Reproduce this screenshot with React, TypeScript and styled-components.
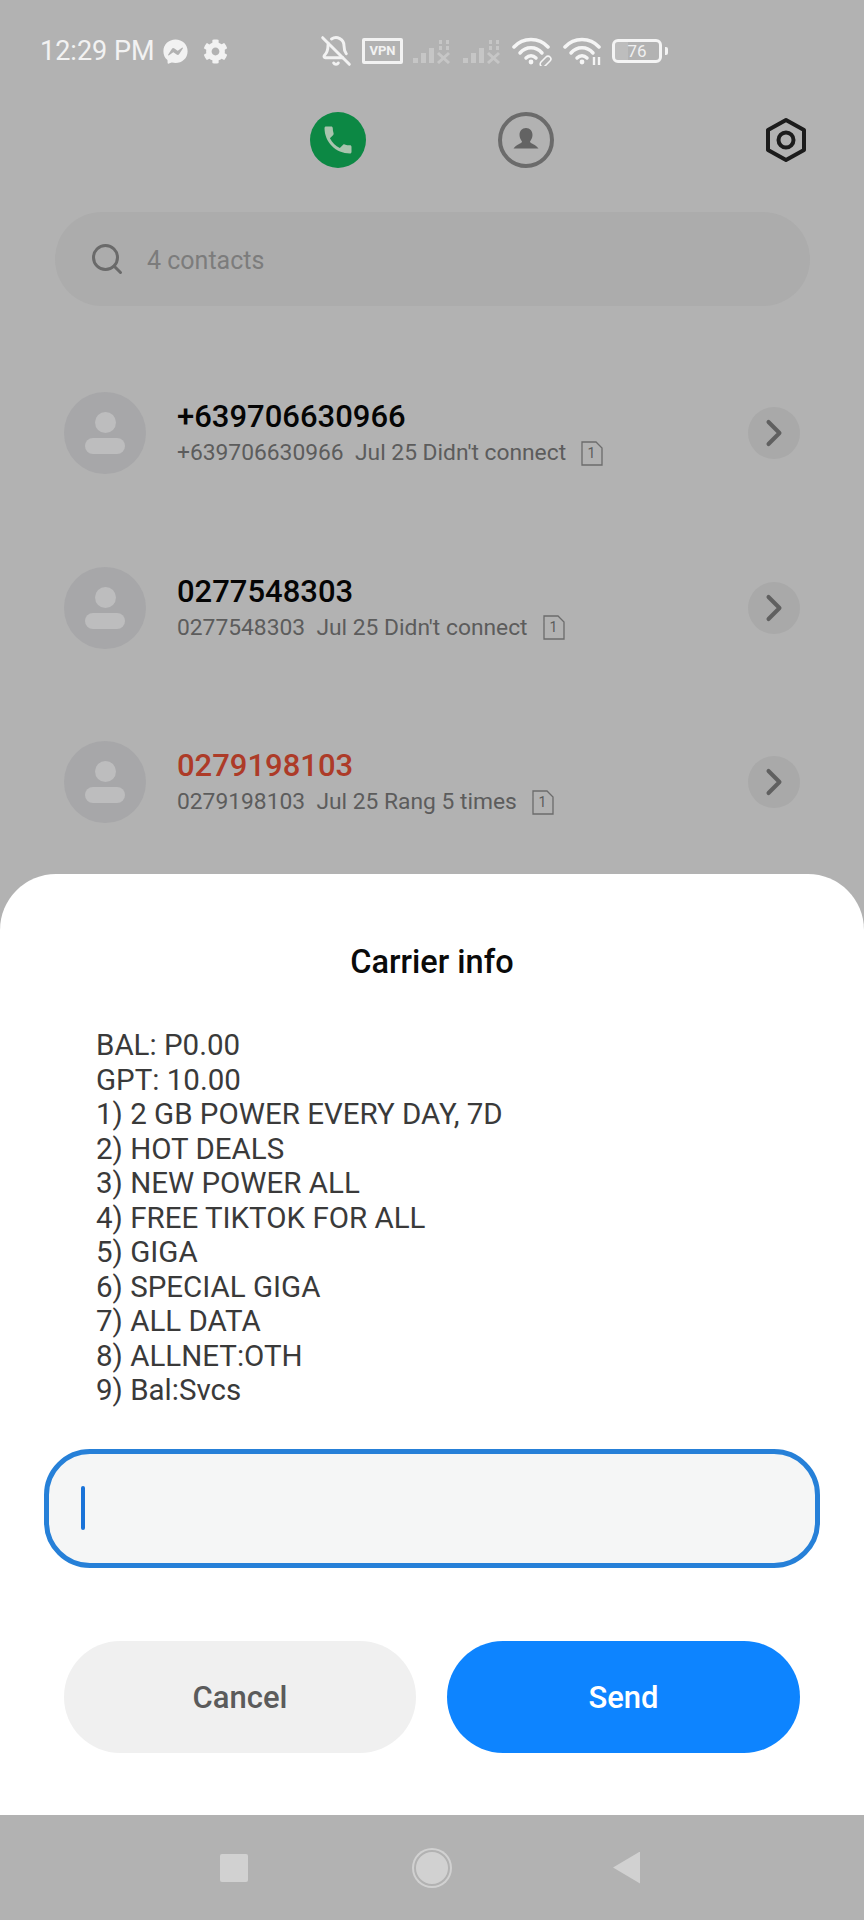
import React from 'react';
import styled, { createGlobalStyle } from 'styled-components';
import { FaCog, FaFacebookMessenger } from 'react-icons/fa';
import { MdPhone } from 'react-icons/md';
import { BellOff, ChevronRight, Search } from 'lucide-react';

const GlobalStyle = createGlobalStyle`
  html, body {
    margin: 0;
    padding: 0;
    background: #b2b2b2;
  }
  * {
    box-sizing: border-box;
  }
`;

const Screen = styled.div`
  width: 864px;
  height: 1920px;
  display: flex;
  flex-direction: column;
  overflow: hidden;
  font-family: Roboto, "Liberation Sans", sans-serif;
  background: #b2b2b2;
`;

const Dimmed = styled.div`
  height: 874px;
  flex: none;
  display: flex;
  flex-direction: column;
  overflow: hidden;
`;

const StatusBar = styled.div`
  height: 102px;
  flex: none;
  display: flex;
  align-items: center;
  padding-left: 40px;
  color: #f2f2f2;
`;

const Clock = styled.span`
  font-size: 27px;
  line-height: 30px;
  width: 122px;
  white-space: nowrap;
`;

const StatusSlot = styled.span<{ $w: number; $gap?: number }>`
  display: flex;
  align-items: center;
  justify-content: center;
  flex: none;
  width: ${p => p.$w}px;
  margin-left: ${p => p.$gap ?? 0}px;
`;

const VpnBox = styled.span`
  width: 41px;
  height: 26px;
  border: 3px solid #f2f2f2;
  border-radius: 2px;
  font-size: 13px;
  font-weight: 700;
  line-height: 20px;
  text-align: center;
`;

const Battery = styled.span`
  position: relative;
  width: 50px;
  height: 24px;
  border: 3px solid #f4f4f4;
  border-radius: 6px;
  font-size: 17px;
  line-height: 18px;
  text-align: center;
  color: #f0f0f0;
  background: linear-gradient(to right, #bdbdbd 0 13px, transparent 13px);
  background-clip: padding-box;

  &::after {
    content: '';
    position: absolute;
    right: -9px;
    top: 5px;
    width: 3px;
    height: 8px;
    border-radius: 0 2px 2px 0;
    background: #f4f4f4;
  }
`;

const TabBar = styled.div`
  height: 76px;
  flex: none;
  display: flex;
  align-items: center;
  padding: 0 57px 0 310px;
`;

const CallTab = styled.div`
  width: 56px;
  height: 56px;
  border-radius: 50%;
  background: #0c8844;
  color: #a9c4ae;
  display: flex;
  align-items: center;
  justify-content: center;
`;

const ContactTab = styled.div`
  width: 56px;
  height: 56px;
  margin-left: 132px;
`;

const SettingsTab = styled.div`
  width: 42px;
  height: 46px;
  margin-left: auto;
`;

const SearchBar = styled.div`
  height: 94px;
  flex: none;
  margin: 34px 54px 0 55px;
  border-radius: 47px;
  background: #acacac;
  display: flex;
  align-items: center;
  padding-left: 34px;
  color: #6a6a6a;
`;

const SearchHint = styled.span`
  margin: 2px 0 0 22px;
  font-size: 25px;
  color: #7c7c7c;
`;

const List = styled.div`
  margin-top: 40px;
  display: flex;
  flex-direction: column;
`;

const Row = styled.div`
  height: 174.5px;
  flex: none;
  display: flex;
  align-items: center;
  padding: 0 64px;
`;

const AvatarCircle = styled.div`
  width: 82px;
  height: 82px;
  flex: none;
  border-radius: 50%;
  background: #a7a7a9;
  display: flex;
  flex-direction: column;
  align-items: center;
`;

const AvatarHead = styled.span`
  width: 21px;
  height: 21px;
  margin-top: 20px;
  border-radius: 50%;
  background: #bdbdbe;
`;

const AvatarBody = styled.span`
  width: 40px;
  height: 16px;
  margin-top: 5px;
  border-radius: 8px;
  background: #bdbdbe;
`;

const RowText = styled.div`
  flex: 1;
  margin: 2px 0 0 31px;
  display: flex;
  flex-direction: column;
`;

const Name = styled.div<{ $missed?: boolean }>`
  font-size: 31px;
  font-weight: 500;
  line-height: 36px;
  color: ${p => (p.$missed ? '#ad3b28' : '#050505')};
`;

const Detail = styled.div`
  margin-top: 2px;
  display: flex;
  align-items: center;
  font-size: 22.800px;
  line-height: 32px;
  color: #5c5c5c;
  white-space: pre;
`;

const SimBadge = styled.svg`
  margin-left: 15px;
  flex: none;
`;

const RowArrow = styled.div`
  width: 52px;
  height: 52px;
  flex: none;
  border-radius: 50%;
  background: #a9a9a9;
  color: #606060;
  display: flex;
  align-items: center;
  justify-content: center;
`;

const Sheet = styled.div`
  height: 941px;
  flex: none;
  border-radius: 56px 56px 0 0;
  background: #fff;
  display: flex;
  flex-direction: column;
`;

const SheetTitle = styled.div`
  margin-top: 70px;
  font-size: 32.500px;
  font-weight: 500;
  line-height: 36px;
  text-align: center;
  color: #0a0a0a;
`;

const Message = styled.div`
  margin: 48px 0 0 96px;
  font-size: 29.500px;
  line-height: 34.500px;
  color: #3a3a3a;
`;

const InputField = styled.div`
  height: 119px;
  flex: none;
  margin: 41px 44px 0 44px;
  border: 5px solid #2680d8;
  border-radius: 46px;
  background: #f5f6f6;
  display: flex;
  align-items: center;
  padding-left: 32px;
`;

const Caret = styled.span`
  width: 4px;
  height: 44px;
  border-radius: 2px;
  background: #1a73d8;
`;

const Actions = styled.div`
  margin: 73px 64px 0 64px;
  display: grid;
  grid-template-columns: 352px 353px;
  column-gap: 31px;
`;

const ActionButton = styled.button<{ $primary?: boolean }>`
  height: 112px;
  border: 0;
  border-radius: 56px;
  padding: 2px 0 0;
  font-family: inherit;
  font-size: 31px;
  font-weight: 500;
  background: ${p => (p.$primary ? '#0d84ff' : '#f0f0f0')};
  color: ${p => (p.$primary ? '#fff' : '#5b5b5b')};
`;

const NavBar = styled.div`
  flex: 1;
  display: flex;
  align-items: center;
  padding-left: 220px;
  background: #b2b2b2;
`;

const NavSquare = styled.span`
  width: 28px;
  height: 28px;
  border-radius: 2px;
  background: #d1d1d1;
`;

const NavCircle = styled.span`
  width: 36px;
  height: 36px;
  margin-left: 166px;
  border-radius: 50%;
  background: #d1d1d1;
  border: 2px solid #b2b2b2;
  box-shadow: 0 0 0 2px #d1d1d1;
`;

const NavBack = styled.span`
  width: 27px;
  height: 32px;
  margin-left: 163px;
  background: #d1d1d1;
  clip-path: polygon(100% 0, 100% 100%, 0 50%);
`;

const SignalIcon = () => (
  <svg width="40" height="26" viewBox="0 0 40 26" fill="#c6c6c6">
    <rect x="0" y="20" width="5" height="5" />
    <rect x="8" y="15" width="5" height="10" />
    <rect x="16" y="10" width="5" height="15" />
    <rect x="26" y="2" width="3" height="4" />
    <rect x="33" y="2" width="3" height="4" />
    <rect x="26" y="8" width="3" height="4" />
    <rect x="33" y="8" width="3" height="4" />
    <path d="M25 15l11 10M36 15L25 25" stroke="#c6c6c6" strokeWidth="3" fill="none" />
  </svg>
);

const WifiIcon = ({ linked }: { linked?: boolean }) => (
  <svg width="42" height="30" viewBox="0 0 42 30" fill="none" stroke="#f5f5f5" strokeWidth="3.500" strokeLinecap="round">
    <path d="M2 11C11 1 27 1 36 11" />
    <path d="M8 17C14 10 24 10 30 17" />
    <path d="M14 22C17 19 21 19 24 22" />
    <circle cx="19" cy="26" r="2.400" fill="#f5f5f5" stroke="none" />
    {linked ? (
      <path d="M29 26l5-5a2.600 2.600 0 0 1 4 4l-5 5a2.600 2.600 0 0 1-4-4z" strokeWidth="1.600" />
    ) : (
      <path d="M31 21v8M36 21v8" strokeWidth="2.400" strokeLinecap="butt" />
    )}
  </svg>
);

const ContactIcon = () => (
  <svg width="56" height="56" viewBox="0 0 56 56">
    <circle cx="28" cy="28" r="26" fill="none" stroke="#6b6b6b" strokeWidth="4" />
    <path
      d="M28 16c4 0 6.500 3 6.500 7 0 3-1.500 5-2.500 6.500 0 2 6 3 8.500 7H15.500c2.500-4 8.500-5 8.500-7-1-1.500-2.500-3.500-2.500-6.500 0-4 2.500-7 6.500-7z"
      fill="#636363"
    />
  </svg>
);

const SettingsIcon = () => (
  <svg width="42" height="46" viewBox="0 0 42 46" fill="none" stroke="#1c1c1c" strokeWidth="4">
    <path d="M21 3l18 10v20L21 43 3 33V13z" strokeLinejoin="round" />
    <circle cx="21" cy="23" r="7.500" />
  </svg>
);

const SimIcon = () => (
  <SimBadge width="22" height="25" viewBox="0 0 22 25">
    <path d="M1 1h14l6 6v17H1z" fill="none" stroke="#6c6c6c" strokeWidth="1.300" />
    <text x="10.500" y="17" fontSize="14" textAnchor="middle" fill="#5c5c5c" fontFamily="Roboto, sans-serif">
      1
    </text>
  </SimBadge>
);

const calls = [
  { name: '+639706630966', detail: '+639706630966  Jul 25 Didn\'t connect' },
  { name: '0277548303', detail: '0277548303  Jul 25 Didn\'t connect' },
  { name: '0279198103', detail: '0279198103  Jul 25 Rang 5 times', missed: true },
];

const menu = [
  'BAL: P0.00',
  'GPT: 10.00',
  '1) 2 GB POWER EVERY DAY, 7D',
  '2) HOT DEALS',
  '3) NEW POWER ALL',
  '4) FREE TIKTOK FOR ALL',
  '5) GIGA',
  '6) SPECIAL GIGA',
  '7) ALL DATA',
  '8) ALLNET:OTH',
  '9) Bal:Svcs',
];

const App = () => {
  return (
    <Screen>
      <GlobalStyle />
      <Dimmed>
        <StatusBar>
          <Clock>12:29 PM</Clock>
          <StatusSlot $w={26}>
            <FaFacebookMessenger size={25} />
          </StatusSlot>
          <StatusSlot $w={26} $gap={14}>
            <FaCog size={25} />
          </StatusSlot>
          <StatusSlot $w={32} $gap={92}>
            <BellOff size={32} strokeWidth={2.200} />
          </StatusSlot>
          <StatusSlot $w={41} $gap={10}>
            <VpnBox>VPN</VpnBox>
          </StatusSlot>
          <StatusSlot $w={40} $gap={10}>
            <SignalIcon />
          </StatusSlot>
          <StatusSlot $w={40} $gap={10}>
            <SignalIcon />
          </StatusSlot>
          <StatusSlot $w={42} $gap={9}>
            <WifiIcon linked />
          </StatusSlot>
          <StatusSlot $w={42} $gap={9}>
            <WifiIcon />
          </StatusSlot>
          <StatusSlot $w={50} $gap={7}>
            <Battery>76</Battery>
          </StatusSlot>
        </StatusBar>
        <TabBar>
          <CallTab>
            <MdPhone size={36} />
          </CallTab>
          <ContactTab>
            <ContactIcon />
          </ContactTab>
          <SettingsTab>
            <SettingsIcon />
          </SettingsTab>
        </TabBar>
        <SearchBar>
          <Search size={36} strokeWidth={2} />
          <SearchHint>4 contacts</SearchHint>
        </SearchBar>
        <List>
          {calls.map(call => (
            <Row key={call.name}>
              <AvatarCircle>
                <AvatarHead />
                <AvatarBody />
              </AvatarCircle>
              <RowText>
                <Name $missed={call.missed}>{call.name}</Name>
                <Detail>
                  {call.detail}
                  <SimIcon />
                </Detail>
              </RowText>
              <RowArrow>
                <ChevronRight size={44} strokeWidth={2.200} />
              </RowArrow>
            </Row>
          ))}
        </List>
      </Dimmed>
      <Sheet>
        <SheetTitle>Carrier info</SheetTitle>
        <Message>
          {menu.map(line => (
            <div key={line}>{line}</div>
          ))}
        </Message>
        <InputField>
          <Caret />
        </InputField>
        <Actions>
          <ActionButton>Cancel</ActionButton>
          <ActionButton $primary>Send</ActionButton>
        </Actions>
      </Sheet>
      <NavBar>
        <NavSquare />
        <NavCircle />
        <NavBack />
      </NavBar>
    </Screen>
  );
};

export default App;
